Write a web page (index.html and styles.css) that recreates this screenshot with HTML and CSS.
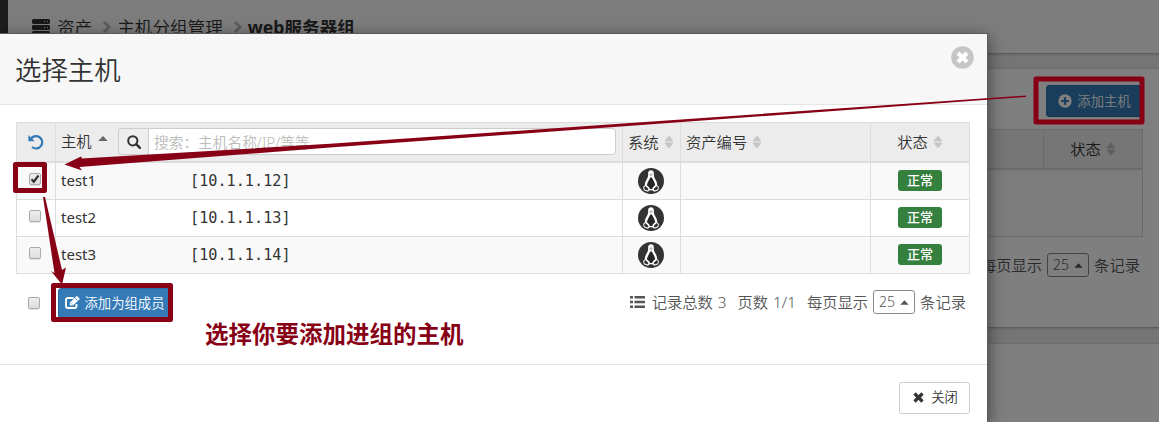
FILE: index.html
```
<!DOCTYPE html>
<html lang="zh-CN">
<head>
<meta charset="utf-8">
<title>选择主机</title>
<link rel="stylesheet" href="styles.css">
</head>
<body>
<svg class="defs" width="0" height="0">
  <symbol id="tux" viewBox="0 0 26 26">
    <circle cx="13" cy="13" r="13" fill="#333"/>
    <path d="M13 2.300c-2 0-3 1.500-2.900 3.500.1 2 .1 2.800-1 4.700-1.300 2.200-2.400 4.500-2.300 6.700l-1.700 1.700.7 3.300 4 1.500 2-1.500h2.500l2 1.500 4-1.500.6-3.300-1.700-1.700c.1-2.200-1-4.500-2.300-6.700-1.100-1.900-1-2.700-1-4.700 0-2-1-3.500-2.900-3.500z" fill="#fff"/>
    <path d="M12.300 9.500l-2.200 4.200-1.300 3.300 2.500 2.400.7 1.700h2.200l.7-1.800 2.400-2.300-1.200-3.300-2.300-4.200z" fill="#252525"/>
    <path d="M7.400 18l-1.300 1.400.5 2.100 2.900 1.100 1-1.500zM18.700 18l1.300 1.400-.5 2.100-2.900 1.100-1-1.500z" fill="#333"/>
    <path d="M11.500 5.500h3v1.800l-1.500 1-1.500-1z" fill="#bbb"/>
  </symbol>
  <symbol id="sort" viewBox="0 0 10 14">
    <path d="M1 6l4-5 4 5zM1 8h8l-4 5z" fill="currentColor" stroke="currentColor" stroke-width=".8" stroke-linejoin="round"/>
  </symbol>
  <symbol id="caret" viewBox="0 0 10 5"><path d="M.3 5L5 0l4.700 5z" fill="currentColor"/></symbol>
  <symbol id="chevron" viewBox="0 0 10 12"><path d="M2 1l5 5-5 5" fill="none" stroke="currentColor" stroke-width="3"/></symbol>
</svg>

<div class="app">
  <aside class="sidebar"></aside>
  <main class="main">
    <header class="crumbs">
      <svg class="server" width="18" height="17" viewBox="0 0 18 17"><path d="M1 0h16l1 1v3l-1 1H1L0 4V1zM1 6h16l1 1v3l-1 1H1l-1-1V7zM1 12h16l1 1v3l-1 1H1l-1-1v-3z" fill="#333"/><path d="M12 2h1v1h-1zm3 0h1v1h-1zm-3 6h1v1h-1zm3 0h1v1h-1zm-3 6h1v1h-1zm3 0h1v1h-1z" fill="#ddd"/></svg>
      <span class="crumb first">资产</span>
      <svg class="sep" width="10" height="12"><use href="#chevron"/></svg>
      <span class="crumb">主机分组管理</span>
      <svg class="sep" width="10" height="12"><use href="#chevron"/></svg>
      <strong class="crumb">web服务器组</strong>
    </header>
    <section class="panel members">
      <div class="toolbar"><button class="btn primary add">
        <svg width="14" height="14" viewBox="0 0 14 14"><circle cx="7" cy="7" r="6.700" fill="#fff"/><path d="M7 3.200v7.600M3.200 7h7.600" stroke="#337ab7" stroke-width="2.200"/></svg>添加主机</button></div>
      <div class="back-head"><span class="back-status">状态<svg class="sort" width="10" height="14"><use href="#sort"/></svg></span></div>
      <div class="back-body"></div>
      <div class="pager back-pager"><span>每页显示</span><span class="select">25<svg width="9" height="5"><use href="#caret"/></svg></span><span>条记录</span></div>
    </section>
    <section class="panel extra"></section>
  </main>
</div>
<div class="backdrop"></div>

<div class="modal">
  <header class="modal-head">
    <h1>选择主机</h1>
    <svg class="close" width="23" height="23" viewBox="0 0 23 23"><circle cx="11.500" cy="11.500" r="11.300" fill="#c6c6c6"/><path d="M7 7l9 9M16 7l-9 9" stroke="#fff" stroke-width="4.200"/></svg>
  </header>
  <div class="modal-body">
    <table class="hosts">
      <colgroup><col class="c-check"><col class="c-host"><col class="c-os"><col class="c-asset"><col class="c-status"></colgroup>
      <thead><tr>
        <th class="center"><svg class="undo" width="16" height="16" viewBox="0 0 16 16"><path d="M2.500 5.500A6.200 6.200 0 1 1 4 13" fill="none" stroke="#337ab7" stroke-width="2.200"/><path d="M.4 1v6.300h6.300z" fill="#337ab7"/></svg></th>
        <th><div class="host-head"><span>主机</span><svg class="asc" width="10" height="5"><use href="#caret"/></svg>
          <div class="search"><span class="addon"><svg width="14" height="14" viewBox="0 0 14 14"><circle cx="5.800" cy="5.800" r="4.600" fill="none" stroke="#333" stroke-width="2"/><path d="M9.200 9.200l3.700 3.700" stroke="#333" stroke-width="2.500" stroke-linecap="round"/></svg></span><input type="text" placeholder="搜索：主机名称/IP/等等"></div></div></th>
        <th><span class="label">系统<svg class="sort" width="10" height="14"><use href="#sort"/></svg></span></th>
        <th><span class="label">资产编号<svg class="sort" width="10" height="14"><use href="#sort"/></svg></span></th>
        <th class="center"><span class="label">状态<svg class="sort" width="10" height="14"><use href="#sort"/></svg></span></th>
      </tr></thead>
      <tbody>
        <tr><td class="center"><span class="check"><svg width="10" height="10" viewBox="0 0 10 10"><path d="M1.500 5.200l2.300 2.500L8.500 1.500" fill="none" stroke="#333" stroke-width="2.200"/></svg></span></td><td><div class="host"><span>test1</span><code>[10.1.1.12]</code></div></td><td class="center"><svg class="os" width="26" height="26"><use href="#tux"/></svg></td><td></td><td class="center"><span class="badge">正常</span></td></tr>
        <tr><td class="center"><span class="check"></span></td><td><div class="host"><span>test2</span><code>[10.1.1.13]</code></div></td><td class="center"><svg class="os" width="26" height="26"><use href="#tux"/></svg></td><td></td><td class="center"><span class="badge">正常</span></td></tr>
        <tr><td class="center"><span class="check"></span></td><td><div class="host"><span>test3</span><code>[10.1.1.14]</code></div></td><td class="center"><svg class="os" width="26" height="26"><use href="#tux"/></svg></td><td></td><td class="center"><span class="badge">正常</span></td></tr>
      </tbody>
    </table>
    <div class="actions">
      <span class="check"></span>
      <button class="btn primary join"><svg width="15" height="13" viewBox="0 0 15 13"><path d="M8.500 2H3Q1 2 1 4v6q0 2 2 2h6.500q2 0 2-2V8" fill="none" stroke="#fff" stroke-width="1.900"/><path d="M4.800 9.500V6.800L11.300.3Q12 0 12.500.3l1.900 1.900q.4.600 0 1.200L8 9.500z" fill="#fff"/><path d="M6 7.300l1.300 1.300M10.300 2.300l2 2" stroke="#337ab7" stroke-width=".8"/></svg>添加为组成员</button>
      <div class="pager">
        <svg class="list" width="15" height="12" viewBox="0 0 15 12"><path d="M0 0h3v2.400H0zm4.500 0H15v2.400H4.500zM0 4.800h3v2.400H0zm4.500 0H15v2.400H4.500zM0 9.600h3V12H0zm4.500 0H15V12H4.500z" fill="#555"/></svg>
        <span class="total">记录总数 3</span><span class="pages">页数 1/1</span><span>每页显示</span><span class="select">25<svg width="9" height="5"><use href="#caret"/></svg></span><span>条记录</span>
      </div>
    </div>
  </div>
  <footer class="modal-foot"><button class="btn plain"><svg width="11" height="11" viewBox="0 0 11 11"><path d="M1.500 1.500l8 8M9.500 1.500l-8 8" stroke="#333" stroke-width="3.200"/></svg>关闭</button></footer>
</div>

<svg class="marks" width="1159" height="422" viewBox="0 0 1159 422">
  <g fill="none" stroke="#880015" stroke-width="5" stroke-linejoin="round">
    <rect x="15.500" y="164.500" width="29" height="26"/>
    <rect x="53.500" y="285.500" width="117" height="34"/>
    <rect x="1036" y="79" width="106" height="43"/>
  </g>
  <path d="M1026 95.500L330 143.800 82 158.500 81 156.500 64.500 164.500 82 170.500 79.500 167 330 147.600 1026 97z" fill="#880015"/>
  <path d="M43 197l11.500 76-3.500-2 11 13.500 4-17-4 2.500L45 197z" fill="#880015"/>
</svg>
<div class="note">选择你要添加进组的主机</div>
</body>
</html>
```
FILE: styles.css
```
* { box-sizing: border-box; }
body {
  margin: 0;
  width: 1159px;
  height: 422px;
  overflow: hidden;
  position: relative;
  color: #333;
  font: 350 15.3px/20px "Noto Sans", "Noto Sans CJK SC", sans-serif;
}
svg { display: block; flex: none; }
.defs { position: absolute; }
button { font-family: inherit; font-weight: inherit; }

/* Page underneath */
.app { display: flex; height: 422px; background: #eaeaea; }
.sidebar { width: 8px; background: #3a3a3a; }
.main { flex: 1; display: flex; flex-direction: column; }
.crumbs {
  height: 54px;
  display: flex;
  align-items: flex-start;
  padding: 15px 0 0 24px;
  background: #fafafa;
  border-bottom: 1px solid #bbb;
  box-shadow: 0 1px 2px rgba(0, 0, 0, .15);
  font-size: 17.6px;
  line-height: 24px;
  white-space: nowrap;
}
.server { margin-top: 4px; }
.crumb.first { margin-left: 7px; }
strong.crumb { font-weight: 700; }
.sep { margin: 6px 6px 0 10px; color: #bbb; }
.crumb + .sep { margin-right: 5px; }
.panel { background: #fff; border-top: 1px solid #ddd; }
.members {
  margin-top: 14px;
  height: 260px;
  padding: 16px 16px 0 400px;
  border-bottom: 1px solid #bbb;
  box-shadow: 0 1px 2px rgba(0, 0, 0, .12);
}
.extra { margin-top: 15px; flex: 1; }
.toolbar { display: flex; justify-content: flex-end; height: 44px; }
.back-head {
  display: flex;
  justify-content: flex-end;
  height: 41px;
  background: #ececec;
  border: 1px solid #d6d6d6;
  border-bottom-width: 2px;
}
.back-status {
  display: flex;
  align-items: center;
  justify-content: center;
  width: 99px;
  border-left: 1px solid #d6d6d6;
}
.back-body { height: 67px; border: 1px solid #d6d6d6; border-top: 0; background: #f9f9f9; }
.back-pager { margin-top: 16px; justify-content: flex-end; padding-right: 3px; }
.backdrop { position: absolute; inset: 0; background: rgba(0, 0, 0, .5); }

/* Controls */
.btn {
  display: flex;
  align-items: center;
  justify-content: center;
  border-radius: 3px;
  padding: 0;
  font-size: 13.33px;
  line-height: 18px;
  white-space: nowrap;
}
.primary { background: #337ab7; border: 1px solid #2e6da4; color: #fff; }
.add { width: 97px; height: 32px; gap: 5px; }
.join { width: 112px; height: 31px; gap: 5px; padding: 0 0 2px 1px; }
.plain { width: 71px; height: 32px; gap: 7px; padding: 0 0 2px 2px; background: #fff; border: 1px solid #ccc; color: #333; }
.check {
  display: inline-block;
  width: 12px;
  height: 12px;
  border: 1px solid #aaa;
  border-radius: 2px;
  background: linear-gradient(#eee, #ddd);
  box-shadow: 0 1px 1px rgba(0, 0, 0, .1);
}
.sort { color: #c5c5c5; margin-left: 5px; }
.back-status .sort { color: #bbb; }

/* Dialog */
.modal {
  position: absolute;
  left: -1px;
  top: 33px;
  width: 989px;
  height: 389px;
  background: #fff;
  border: 1px solid #5a5a5a;
  border-bottom: 0;
  box-shadow: 0 4px 15px rgba(0, 0, 0, .5);
}
.modal-head {
  display: flex;
  justify-content: space-between;
  height: 71px;
  padding: 12px 13px 0 15px;
  background: #f7f7f7;
  border-bottom: 1px solid #e5e5e5;
}
h1 { margin: 5px 0 0; font-size: 26.400px; line-height: 38px; font-weight: 350; }
.modal-body { height: 260px; padding: 17px 17px 0 16px; border-bottom: 1px solid #e5e5e5; }
.hosts {
  width: 954px;
  table-layout: fixed;
  border-collapse: separate;
  border-spacing: 0;
  border: solid #ddd;
  border-width: 1px 0 0 1px;
}
.c-check { width: 39px; }
.c-host { width: 567px; }
.c-os { width: 58px; }
.c-asset { width: 190px; }
.c-status { width: 99px; }
th, td {
  padding: 0 5px;
  border: solid #ddd;
  border-width: 0 1px 1px 0;
  font-weight: 350;
  text-align: left;
  vertical-align: middle;
}
th { height: 40px; background: #ececec; border-bottom-width: 2px; }
td { height: 37px; }
tbody tr:nth-child(odd) { background: #f9f9f9; }
.center { text-align: center; }
.undo { margin: 0 auto 1px 6px; }
.os { margin: 0 0 0 10px; }
td .check { display: block; margin: 0 auto 5px 7px; }
.host-head { display: flex; align-items: center; padding-bottom: 1px; }
.host-head > span { margin-top: -1px; }
.asc { margin: -6px 0 0 6px; color: #666; }
.search { display: flex; width: 498px; height: 27px; margin-left: auto; margin-right: 1px; }
.addon {
  display: flex;
  align-items: center;
  justify-content: center;
  width: 30px;
  background: #eee;
  border: 1px solid #ccc;
  border-right: 0;
  border-radius: 4px 0 0 4px;
}
.search input {
  flex: 1;
  min-width: 0;
  padding: 0 5px;
  border: 1px solid #ccc;
  border-radius: 0 4px 4px 0;
  font: 350 14.7px/20px "Noto Sans", "Noto Sans CJK SC", sans-serif;
}
.search input::placeholder { color: #bbb; }
.label { display: inline-flex; align-items: center; white-space: nowrap; }
.host { display: flex; align-items: center; }
.host span { width: 129px; padding-bottom: 2px; font-weight: 400; font-size: 15px; }
code { font: 15.2px/20px "DejaVu Sans Mono", monospace; padding-bottom: 1px; }
.badge {
  display: block;
  width: 44px;
  height: 21px;
  margin: 0 auto 1px;
  border-radius: 3px;
  background: #36803f;
  color: #fff;
  font-size: 13px;
  line-height: 20px;
  font-weight: 500;
}
.actions { display: flex; align-items: center; height: 31px; margin-top: 14px; padding-left: 12px; }
.actions > .check { margin-top: -2px; }
.join { margin-left: 18px; }
.pager { display: flex; align-items: center; gap: 5px; color: #555; white-space: nowrap; }
.actions .pager { margin: -3px 0 0 auto; padding-right: 4px; }
.total, .pages { margin-right: 6px; word-spacing: 1px; }
.list { margin-right: 2px; }
.select {
  display: flex;
  align-items: center;
  justify-content: center;
  gap: 5px;
  width: 42px;
  height: 24px;
  border: 1px solid #888;
  border-radius: 3px;
  font-size: 14px;
}
.modal-foot { display: flex; justify-content: flex-end; padding: 17px 17px 0 0; }

/* Walkthrough annotations */
.marks { position: absolute; left: 0; top: 0; }
.note {
  position: absolute;
  left: 205px;
  top: 317px;
  color: #880015;
  font-size: 23.500px;
  line-height: 34px;
  font-weight: 700;
  white-space: nowrap;
}
```
